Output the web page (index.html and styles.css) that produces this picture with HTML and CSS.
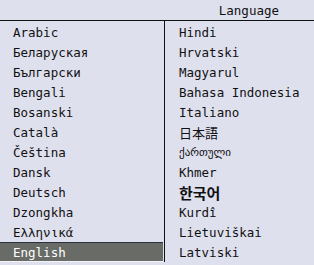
FILE: index.html
```html
<!DOCTYPE html>
<html>
<head>
<meta charset="utf-8">
<link rel="stylesheet" href="styles.css">
</head>
<body>
<div class="screen">
  <div class="header"><span class="title">Language</span></div>
  <div class="cols">
    <ul class="col left">
      <li>Arabic</li>
      <li>Беларуская</li>
      <li>Български</li>
      <li>Bengali</li>
      <li>Bosanski</li>
      <li>Català</li>
      <li>Čeština</li>
      <li>Dansk</li>
      <li>Deutsch</li>
      <li>Dzongkha</li>
      <li>Ελληνικά</li>
      <li class="sel">English</li>
    </ul>
    <ul class="col right">
      <li>Hindi</li>
      <li>Hrvatski</li>
      <li>Magyarul</li>
      <li>Bahasa Indonesia</li>
      <li>Italiano</li>
      <li class="cjk">日本語</li>
      <li class="geo">ქართული</li>
      <li>Khmer</li>
      <li class="ko">한국어</li>
      <li>Kurdî</li>
      <li>Lietuviškai</li>
      <li>Latviski</li>
    </ul>
  </div>
</div>
</body>
</html>
```
FILE: styles.css
```css
html, body {
  margin: 0;
  padding: 0;
  background: #dfe0ee;
}
.screen {
  width: 314px;
  height: 265px;
  overflow: hidden;
  background: #dfe0ee;
  font-family: "DejaVu Sans Mono", monospace;
  font-size: 12.5px;
  color: #111;
}
.header {
  height: 21px;
  box-sizing: border-box;
  border-bottom: 1px solid #111;
  display: flex;
  justify-content: flex-end;
  align-items: flex-start;
  padding-right: 35px;
  padding-top: 2px;
}
.title {
  line-height: 18px;
}
.cols {
  display: grid;
  grid-template-columns: 165px 1fr;
}
.col {
  list-style: none;
  margin: 0;
  padding: 1px 0 0 0;
}
.left {
  border-right: 1px solid #111;
}
.col li {
  box-sizing: border-box;
  height: 20px;
  padding-top: 2px;
  line-height: 18px;
  white-space: nowrap;
}
.left li {
  padding-left: 13px;
  margin-right: 1px;
}
.right li {
  padding-left: 14px;
}
.left li.sel {
  background: #696b67;
  color: #fff;
  box-shadow: inset 0 1px 0 #2c3040;
  border-bottom: 1px solid #f4f4fa;
}
.cjk {
  font-family: "Noto Sans CJK JP", sans-serif;
  font-size: 13px;
}
.geo {
  font-family: "DejaVu Sans", sans-serif;
  font-size: 11px;
}
.ko {
  font-family: "Noto Sans CJK KR", sans-serif;
  font-size: 15px;
  font-weight: bold;
}
```
